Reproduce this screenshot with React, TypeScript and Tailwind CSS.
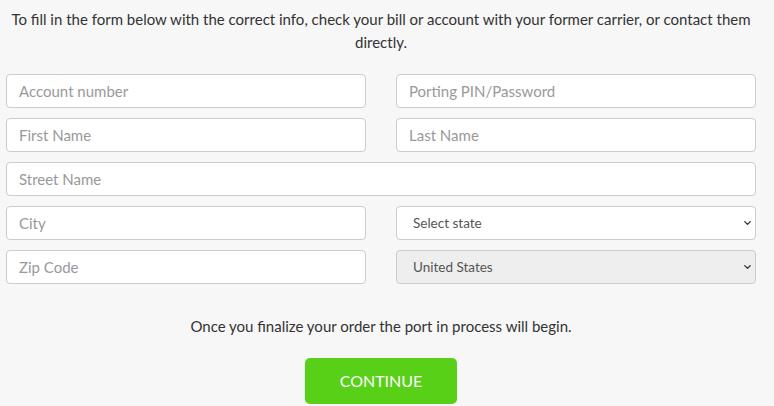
import { ChevronDown } from 'lucide-react';

const font = { fontFamily: 'Lato, "Open Sans", sans-serif' };

function Field({ placeholder, className = '' }: { placeholder: string; className?: string }) {
  return (
    <input
      type="text"
      placeholder={placeholder}
      className={`h-[34px] w-full rounded-[4px] border border-[#cccccc] bg-white px-3 text-[15px] text-[#555] placeholder:text-[#999] outline-none ${className}`}
    />
  );
}

function Select({ label, disabled = false }: { label: string; disabled?: boolean }) {
  return (
    <div className="relative">
      <select
        disabled={disabled}
        className={`h-[34px] w-full appearance-none rounded-[4px] border border-[#cccccc] pl-4 pr-8 text-[13.5px] text-[#555] opacity-100 outline-none ${disabled ? 'bg-[#eeeeee]' : 'bg-white'}`}
      >
        <option>{label}</option>
      </select>
      <ChevronDown className="pointer-events-none absolute right-[3px] top-1/2 h-[11px] w-[11px] -translate-y-1/2 text-[#333]" strokeWidth={3} />
    </div>
  );
}

export default function App() {
  return (
    <div className="min-h-screen bg-[#f7f7f7]">
      <div className="w-[762px] pt-[8px]" style={font}>
        <p className="text-center text-[15px] leading-[23px] text-[#333]">
          To fill in the form below with the correct info, check your bill or account with your former carrier, or contact them directly.
        </p>
        <form className="ml-[6px] mt-[20px] w-[750px]">
          <div className="grid grid-cols-2 gap-x-[30px] gap-y-[10px]">
            <Field placeholder="Account number" />
            <Field placeholder="Porting PIN/Password" />
            <Field placeholder="First Name" />
            <Field placeholder="Last Name" />
            <Field placeholder="Street Name" className="col-span-2" />
            <Field placeholder="City" />
            <Select label="Select state" />
            <Field placeholder="Zip Code" />
            <Select label="United States" disabled />
          </div>
        </form>
        <p className="mt-[31px] text-center text-[15px] leading-[23px] text-[#333]">
          Once you finalize your order the port in process will begin.
        </p>
        <div className="mt-[20px] flex justify-center">
          <button
            type="button"
            className="h-[46px] w-[152px] rounded-[5px] bg-[#57d017] text-[16px] text-white"
          >
            CONTINUE
          </button>
        </div>
      </div>
    </div>
  );
}
